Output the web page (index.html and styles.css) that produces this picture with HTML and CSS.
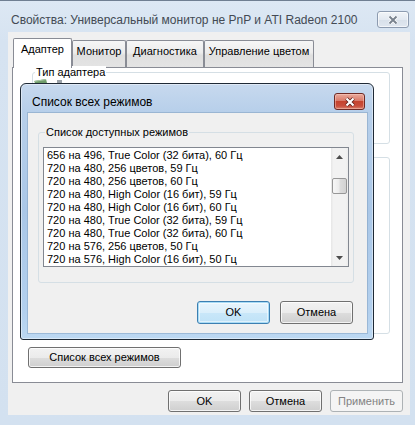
FILE: index.html
```html
<!DOCTYPE html>
<html>
<head>
<meta charset="utf-8">
<link rel="stylesheet" href="styles.css">
</head>
<body>
<div class="window">
  <div class="titlebar">
    <span class="title">Свойства: Универсальный монитор не PnP и ATI Radeon 2100</span>
    <span class="close inactive">
      <svg width="12" height="10" viewBox="0 0 12 10"><path class="xo" d="M2.5 1.5 L9.5 8.5 M9.5 1.5 L2.5 8.5"/><path class="xi" d="M2.5 1.5 L9.5 8.5 M9.5 1.5 L2.5 8.5"/></svg>
    </span>
  </div>
  <div class="client">
    <div class="tabs">
      <div class="tab selected t1">Адаптер</div>
      <div class="tab t2">Монитор</div>
      <div class="tab t3">Диагностика</div>
      <div class="tab t4">Управление цветом</div>
    </div>
    <div class="panel">
      <div class="group g1">
        <span class="glabel">Тип адаптера</span>
        <svg class="adapter-icon" width="32" height="4" viewBox="0 0 32 4"><polygon points="1,2 13,0 14,4 2,4" fill="#6f9d6a"/><polygon points="1,2 13,0 13,1 1,3" fill="#a9c8a4"/><rect x="24" y="1" width="5" height="3" fill="#9aa1a8"/></svg>
      </div>
      <div class="group g2"></div>
      <button class="btn list-btn">Список всех режимов</button>
    </div>
    <div class="actions">
      <button class="btn">OK</button>
      <button class="btn">Отмена</button>
      <button class="btn" disabled>Применить</button>
    </div>
  </div>

  <div class="dialog">
    <div class="dtitlebar">
      <span class="dtitle">Список всех режимов</span>
      <span class="close red">
        <svg width="12" height="10" viewBox="0 0 12 10"><path class="ro" d="M2.5 1.5 L9.5 8.5 M9.5 1.5 L2.5 8.5"/><path class="ri" d="M2.5 1.5 L9.5 8.5 M9.5 1.5 L2.5 8.5"/></svg>
      </span>
    </div>
    <div class="dclient">
      <div class="group modes">
        <span class="glabel dlabel">Список доступных режимов</span>
        <div class="listbox">
          <div class="items">
            <div>656 на 496, True Color (32 бита), 60 Гц</div>
            <div>720 на 480, 256 цветов, 59 Гц</div>
            <div>720 на 480, 256 цветов, 60 Гц</div>
            <div>720 на 480, High Color (16 бит), 59 Гц</div>
            <div>720 на 480, High Color (16 бит), 60 Гц</div>
            <div>720 на 480, True Color (32 бита), 59 Гц</div>
            <div>720 на 480, True Color (32 бита), 60 Гц</div>
            <div>720 на 576, 256 цветов, 50 Гц</div>
            <div>720 на 576, High Color (16 бит), 50 Гц</div>
          </div>
          <div class="scrollbar">
            <div class="sb-btn"><svg width="7" height="4" viewBox="0 0 7 4"><polygon points="3.5,0 7,4 0,4" fill="#4d4d4d"/></svg></div>
            <div class="sb-track"><div class="thumb"></div></div>
            <div class="sb-btn"><svg width="7" height="4" viewBox="0 0 7 4"><polygon points="0,0 7,0 3.5,4" fill="#4d4d4d"/></svg></div>
          </div>
        </div>
      </div>
      <div class="dactions">
        <button class="btn default">OK</button>
        <button class="btn">Отмена</button>
      </div>
    </div>
  </div>
</div>
</body>
</html>
```
FILE: styles.css
```css
* { box-sizing: border-box; }
html, body { margin: 0; padding: 0; }
body {
  width: 415px;
  height: 425px;
  overflow: hidden;
  font-family: "Liberation Sans", Arial, sans-serif;
  font-size: 11px;
  color: #000;
  background: #d5e2f0;
}
.window {
  position: relative;
  width: 415px;
  height: 425px;
  border-top: 1px solid #707f92;
  background: linear-gradient(#dde8f4, #d6e3f1 40px, #d3e1f0);
  display: flex;
  flex-direction: column;
}
.titlebar {
  height: 31px;
  display: flex;
  justify-content: space-between;
  align-items: flex-start;
  padding: 10px 6px 0 11px;
}
.title {
  font-size: 12px;
  line-height: 15px;
  margin-top: 2px;
  color: #434a54;
}
.close {
  display: flex;
  align-items: center;
  justify-content: center;
  height: 17px;
  border-radius: 3px;
}
.close.inactive {
  width: 32px;
  border: 1px solid #8d9bb0;
  background: linear-gradient(#f1f4f8, #e3e9f1 50%, #d8e0ea 51%, #e0e7f0);
  box-shadow: inset 0 0 0 1px rgba(255,255,255,0.6);
}
.xo { stroke: #ffffff; stroke-width: 3.8; fill: none; }
.xi { stroke: #7a838f; stroke-width: 2; fill: none; }
.close.red {
  width: 31px;
  border: 1px solid #6e2a25;
  background: linear-gradient(#e9aa9c, #d97a6a 45%, #c5442f 50%, #c94e3c 80%, #d9836f);
  box-shadow: inset 0 0 0 1px rgba(255,210,200,0.45);
}
.ro { stroke: #5a1d18; stroke-width: 3.8; fill: none; }
.ri { stroke: #ffffff; stroke-width: 2.2; fill: none; }

.client {
  margin: 0 5px 0 8px;
  height: 383px;
  background: #f0f0f0;
  padding: 6px 7px 0 4px;
  display: flex;
  flex-direction: column;
}
.tabs {
  display: flex;
  align-items: flex-end;
  height: 29px;
  padding-left: 1px;
}
.tab {
  height: 27px;
  border: 1px solid #898c95;
  border-bottom: none;
  border-radius: 2px 2px 0 0;
  background: linear-gradient(#f6f6f6, #ececec 45%, #dfdfdf 55%, #e4e4e4);
  text-align: center;
  padding-top: 4px;
  line-height: 13px;
  white-space: nowrap;
}
.tab.selected {
  height: 30px;
  margin-bottom: -1px;
  background: #fff;
  padding-top: 4px;
  position: relative;
  z-index: 1;
}
.t1 { width: 59px; }
.t2 { width: 54px; }
.t3 { width: 78px; }
.t4 { width: 110px; }

.panel {
  height: 316px;
  border: 1px solid #898c95;
  background: #fff;
  padding-top: 4px;
}
.group {
  border: 1px solid #d5dfe5;
  border-radius: 3px;
}
.g1 { margin: 0 12px 0 19px; height: 72px; }
.g2 { margin: 13px 12px 0 19px; height: 177px; }
.glabel {
  display: block;
  width: fit-content;
  margin: -7px 0 0 2px;
  padding: 0 1px;
  line-height: 13px;
  background: #fff;
  white-space: nowrap;
}
.adapter-icon { display: block; }
.list-btn { margin: 13px 0 0 15px; width: 153px; height: 21px; }

.actions {
  display: flex;
  justify-content: flex-end;
  gap: 8px;
  margin-top: 7px;
}
.actions .btn { width: 73px; height: 22px; }

.btn {
  font-family: "Liberation Sans", Arial, sans-serif;
  font-size: 11px;
  color: #000;
  border: 1px solid #707070;
  border-radius: 3px;
  background: linear-gradient(#f2f2f2, #ebebeb 50%, #dddddd 51%, #cfcfcf);
  box-shadow: inset 0 0 0 1px rgba(255,255,255,0.75);
  padding: 0;
  line-height: 13px;
}
.btn:disabled {
  border-color: #adb2b5;
  background: #f4f4f4;
  color: #838383;
  box-shadow: none;
}
.btn.default {
  border-color: #3c7fb1;
  background: linear-gradient(#e9f5fc, #dbeffb 50%, #c9e7f9 51%, #bfe2f7);
  box-shadow: inset 0 0 0 1px #a9dcf6, inset 0 0 0 2px rgba(255,255,255,0.5);
}

.dialog {
  position: absolute;
  left: 20px;
  top: 82px;
  width: 354px;
  height: 257px;
  border: 1px solid #1f2a36;
  border-radius: 6px 6px 3px 3px;
  background: linear-gradient(#c7d9ee, #b7cfea 28px, #aac7e7 50%, #b3d0ee 90%, #bcd8f2);
  box-shadow: inset 0 0 0 1px rgba(255,255,255,0.45);
  display: flex;
  flex-direction: column;
}
.dtitlebar {
  height: 29px;
  display: flex;
  justify-content: space-between;
  align-items: flex-start;
  padding: 9px 8px 0 11px;
}
.dtitle {
  font-size: 12px;
  line-height: 15px;
  margin-top: 2px;
  color: #000;
}
.dclient {
  margin: 0 6px 0 7px;
  height: 220px;
  background: #f0f0f0;
  padding: 19px 13px 0 10px;
  box-shadow: 0 0 0 1px rgba(120,150,185,0.45);
}
.modes { height: 151px; }
.dlabel { background: #f0f0f0; margin-left: 6px; }
.listbox {
  margin: 8px 0 0 4px;
  width: 306px;
  height: 120px;
  border: 1px solid #828790;
  background: #fff;
  display: flex;
}
.items {
  flex: 1;
  padding: 1px 0 0 3px;
  line-height: 13px;
  overflow: hidden;
  white-space: nowrap;
}
.scrollbar {
  width: 17px;
  display: flex;
  flex-direction: column;
  background: linear-gradient(to right, #e6e6e6, #f2f2f2 15%, #f2f2f2 85%, #ececec);
}
.sb-btn {
  height: 17px;
  display: flex;
  align-items: center;
  justify-content: center;
}
.sb-track { flex: 1; }
.thumb {
  margin: 13px 1px 0;
  height: 16px;
  border: 1px solid #979797;
  border-radius: 2px;
  background: linear-gradient(to right, #f7f7f7, #ececec 45%, #dcdcdc 55%, #d2d2d2);
}
.dactions {
  display: flex;
  justify-content: flex-end;
  gap: 10px;
  margin: 18px 1px 0 0;
}
.dactions .btn { width: 73px; height: 23px; }
```
